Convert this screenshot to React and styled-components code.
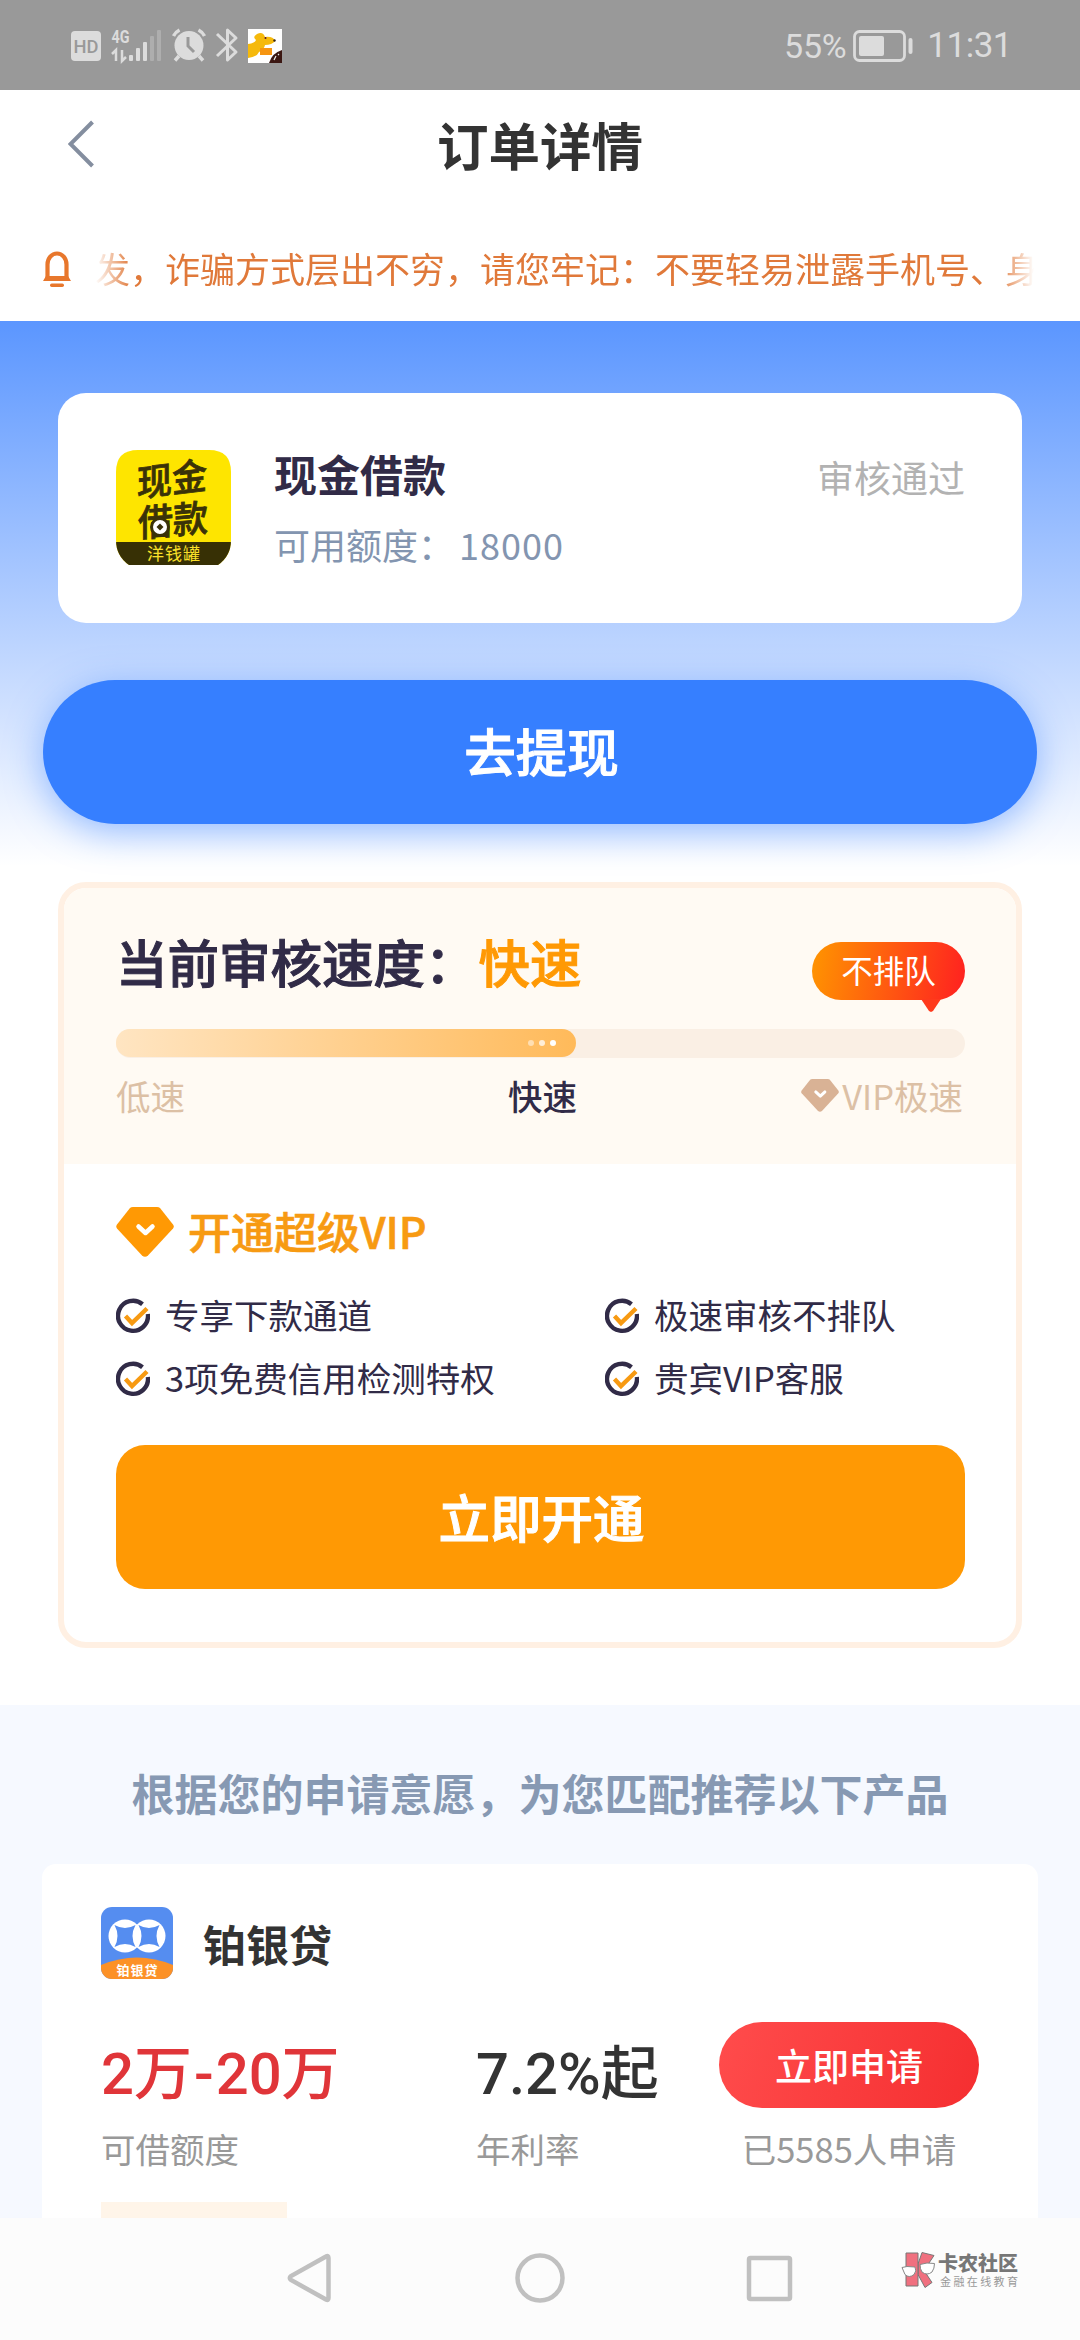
import React from 'react';
import styled, { createGlobalStyle } from 'styled-components';

const App = () => (
  <>
    <GlobalStyle />
    <Page>
      <StatusBar />
      <Header>
        <BackIcon viewBox="0 0 26 48">
          <path d="M24.500 2 2.500 24l22 22" fill="none" stroke="#848e9f" strokeWidth="4" />
        </BackIcon>
        <PageTitle>订单详情</PageTitle>
      </Header>
      <Notice>
        <BellIcon />
        <NoticeText>发，诈骗方式层出不穷，请您牢记：不要轻易泄露手机号、身</NoticeText>
      </Notice>
      <Hero>
        <LoanCard>
          <CashLogo />
          <LoanInfo>
            <LoanName>现金借款</LoanName>
            <LoanLimit>可用额度：<Amount>18000</Amount></LoanLimit>
          </LoanInfo>
          <LoanStatus>审核通过</LoanStatus>
        </LoanCard>
        <WithdrawButton>去提现</WithdrawButton>
      </Hero>
      <VipCard>
        <SpeedPanel>
          <SpeedHead>
            <SpeedTitle>当前审核速度：<Highlight>快速</Highlight></SpeedTitle>
            <QueueBadge>不排队</QueueBadge>
          </SpeedHead>
          <Track>
            <Fill>
              <Dot $opacity={0.5} />
              <Dot $opacity={0.75} />
              <Dot $opacity={1} />
            </Fill>
          </Track>
          <SpeedLabels>
            <SpeedLabel>低速</SpeedLabel>
            <SpeedLabel $active>快速</SpeedLabel>
            <SpeedLabel $end>
              <Diamond width={38} height={33} color="#d9b295" />
              VIP极速
            </SpeedLabel>
          </SpeedLabels>
        </SpeedPanel>
        <VipBody>
          <VipHead>
            <Diamond width={58} height={50} color="#ff9904" />
            <VipTitle>开通超级VIP</VipTitle>
          </VipHead>
          <FeatureGrid>
            {features.map((text) => (
              <Feature key={text}>
                <CheckIcon />
                <FeatureText>{text}</FeatureText>
              </Feature>
            ))}
          </FeatureGrid>
          <OpenButton>立即开通</OpenButton>
        </VipBody>
      </VipCard>
      <Recommend>
        <RecommendTitle>根据您的申请意愿，为您匹配推荐以下产品</RecommendTitle>
        <ProductCard>
          <ProductHead>
            <SilverLogo />
            <ProductName>铂银贷</ProductName>
          </ProductHead>
          <ProductBody>
            <Stat>
              <StatValue $color="#e03539">2万<Dash>-</Dash>20万</StatValue>
              <StatLabel>可借额度</StatLabel>
            </Stat>
            <Stat>
              <StatValue $color="#333">7.2%起</StatValue>
              <StatLabel>年利率</StatLabel>
            </Stat>
            <Apply>
              <ApplyButton>立即申请</ApplyButton>
              <StatLabel>已5585人申请</StatLabel>
            </Apply>
          </ProductBody>
          <ProductTag />
        </ProductCard>
      </Recommend>
      <NavBar>
        <NavIcon viewBox="0 0 52 52">
          <path d="M45.500 6V46Q45.500 49 43 47.500L8 28Q5.500 26 8 24L43 4.500Q45.500 3 45.500 6Z" />
        </NavIcon>
        <NavIcon viewBox="0 0 52 52">
          <circle cx="26" cy="26" r="22.500" />
        </NavIcon>
        <NavIcon viewBox="0 0 52 52">
          <rect x="4" y="6" width="41" height="41" rx="1.500" />
        </NavIcon>
        <Watermark>
          <KLogo />
          <div>
            <WatermarkName>卡农社区</WatermarkName>
            <WatermarkSlogan>金融在线教育</WatermarkSlogan>
          </div>
        </Watermark>
      </NavBar>
    </Page>
  </>
);

export default App;

const features = ['专享下款通道', '极速审核不排队', '3项免费信用检测特权', '贵宾VIP客服'];

const StatusBar = () => (
  <StatusRow>
    <svg width="214" height="40" viewBox="0 0 214 40">
      <rect x="1" y="6" width="30" height="30" rx="4" fill="#dcdcdc" />
      <text x="16" y="28" textAnchor="middle" fontFamily="Roboto, sans-serif" fontWeight="500" fontSize="19" textLength="25" lengthAdjust="spacingAndGlyphs" fill="#999">HD</text>
      <text x="41.500" y="18" fontFamily="Roboto, sans-serif" fontWeight="700" fontSize="18.500" textLength="18" lengthAdjust="spacingAndGlyphs" fill="#dcdcdc">4G</text>
      <path d="M42 29l4-4v11M52 25v11l4-4" fill="none" stroke="#dcdcdc" strokeWidth="2.500" />
      <g fill="#dcdcdc">
        <rect x="59" y="30" width="4" height="6" rx="1" />
        <rect x="66" y="23" width="4" height="13" rx="1" />
        <rect x="73" y="17" width="4" height="19" rx="1" />
      </g>
      <g fill="#aeaeae">
        <rect x="80" y="11" width="4" height="25" rx="1" />
        <rect x="87" y="5" width="4" height="31" rx="1" />
      </g>
      <circle cx="119" cy="20.500" r="14.500" fill="#dcdcdc" />
      <path d="M103.500 11q2-4 6-6M134.500 11q-2-4-6-6M109 31l-4 4.500M129 31l4 4.500" stroke="#dcdcdc" strokeWidth="3.500" fill="none" />
      <path d="M118 12v9l6 6" stroke="#999" strokeWidth="3" fill="none" />
      <path d="M147 9l19 18-8.500 8V5l8.500 8-19 18" fill="none" stroke="#dcdcdc" strokeWidth="3" strokeLinejoin="round" />
      <rect x="178" y="4" width="34" height="34" fill="#fff" />
      <path d="M178 19q7-1 8-4-4-3 1-6 6-3 8 3 8-1 10 4-3 4-10 4-1 5-6 7-2 5-11 6z" fill="#f5b90c" />
      <rect x="190" y="23" width="12" height="7" fill="#f69511" />
      <path d="M199 38q3-10 13-13v13z" fill="#3b1712" />
      <circle cx="195.500" cy="13" r="1" fill="#513" />
      <circle cx="204.500" cy="15.500" r="1.200" fill="#321" />
      <path d="M204 35l2-4M208 30l1-1" stroke="#eee" strokeWidth="1.200" />
    </svg>
    <StatusRight>
      <Percent>55%</Percent>
      <svg width="60" height="34" viewBox="0 0 60 34">
        <rect x="1.500" y="2.500" width="50" height="29" rx="5" fill="none" stroke="#dcdcdc" strokeWidth="2.800" />
        <rect x="6" y="7" width="25" height="20" rx="2" fill="#dcdcdc" />
        <rect x="55.500" y="9" width="4" height="16" rx="2" fill="#dcdcdc" />
      </svg>
      <Clock>11:31</Clock>
    </StatusRight>
  </StatusRow>
);

const BellIcon = () => (
  <svg width="28" height="36" viewBox="0 0 28 36">
    <path d="M4.500 27V13.500a9.500 11 0 0 1 19 0V27" fill="none" stroke="#e8772c" strokeWidth="4.200" />
    <path d="M3 25h22l3 5H0z" fill="#e8772c" />
    <rect x="7" y="32.500" width="14" height="3.500" rx="1.700" fill="#e8772c" />
  </svg>
);

const CashLogo = () => (
  <LogoSvg width="115" height="115" viewBox="0 0 115 115">
    <defs>
      <clipPath id="cash">
        <path d="M22 0H93Q115 0 115 22V90Q115 106 102 115H13Q0 106 0 90V22Q0 0 22 0Z" />
      </clipPath>
    </defs>
    <g clipPath="url(#cash)">
      <rect width="115" height="115" fill="#fee500" />
      <rect y="92" width="115" height="23" fill="#373005" />
    </g>
    <g fill="#3a3208" stroke="#3a3208" strokeWidth="0.800" fontFamily="'Noto Sans CJK SC', sans-serif" fontWeight="500" fontSize="37">
      <text transform="translate(21 47) skewY(-7)" textLength="70" lengthAdjust="spacingAndGlyphs">现金</text>
      <text transform="translate(22 87) skewY(-5)" textLength="70" lengthAdjust="spacingAndGlyphs">借款</text>
    </g>
    <circle cx="44" cy="77" r="8.500" fill="#fff" stroke="#3a3208" strokeWidth="3" />
    <path d="M44 73.500l3.500 3.500-3.500 3.500-3.500-3.500z" fill="#3a3208" />
    <text x="57.500" y="110" textAnchor="middle" fontFamily="'Noto Sans CJK SC', sans-serif" fontSize="17" textLength="53" fill="#fbe02a">洋钱罐</text>
  </LogoSvg>
);

const SilverLogo = () => (
  <svg width="72" height="72" viewBox="0 0 72 72">
    <defs>
      <clipPath id="silver">
        <rect width="72" height="72" rx="11" />
      </clipPath>
    </defs>
    <g clipPath="url(#silver)">
      <rect width="72" height="72" fill="#558df0" />
      <path d="M0 58Q36 43 72 58V72H0Z" fill="#fc9127" />
    </g>
    <circle cx="24" cy="29" r="16.500" fill="#fff" />
    <circle cx="48" cy="29" r="16.500" fill="#fff" />
    <path d="M13.500 18q10.500 6 21 0-6 11 0 22-10.500-6-21 0 6-11 0-22zM37.500 18q10.500 6 21 0-6 11 0 22-10.500-6-21 0 6-11 0-22z" fill="#558df0" />
    <text x="36" y="68" textAnchor="middle" fontFamily="'Noto Sans CJK SC', sans-serif" fontWeight="700" fontSize="13" textLength="41" fill="#fff">铂银贷</text>
  </svg>
);

const Diamond = ({ width, height, color }) => (
  <svg width={width} height={height} viewBox="0 0 58 50">
    <path d="M17 0H41Q43 0 44 1L57 17.500Q58.500 19.500 57 21.500L32 48.500Q29 51 26 48.500L1 21.500Q-.500 19.500 1 17.500L14 1Q15 0 17 0Z" fill={color} />
    <path d="M22.500 19.500l7 6.500 7-6.500" fill="none" stroke="#fff" strokeWidth="4.500" strokeLinecap="round" strokeLinejoin="round" />
  </svg>
);

const CheckIcon = () => (
  <svg width="34" height="36" viewBox="0 0 34 36">
    <path d="M26.500 6.200A15 15 0 1 0 31.900 16" fill="none" stroke="#312b47" strokeWidth="4.400" />
    <path d="M9.500 18l6.500 7L31 10.500" fill="none" stroke="#f79a12" strokeWidth="4.400" />
  </svg>
);

const KLogo = () => (
  <svg width="35" height="36" viewBox="0 0 35 36">
    <g fill="#f0707f" stroke="#777" strokeWidth="1">
      <path d="M21 .500l12 3-10 15 8 12-7 5-7-13V12z" />
      <path d="M5 1h12v33H5z" />
    </g>
    <g fill="#fff" stroke="#888" strokeWidth="1">
      <path d="M1 15.500l5-1 8 .500q2 4-1 7.500-5 4-9 0z" />
      <path d="M19 12.500l7-1.500 7.500.500q0 5-2.500 8.500-5 4-10 0-2-3-2-7.500z" />
    </g>
  </svg>
);

const GlobalStyle = createGlobalStyle`
  body {
    margin: 0;
    background: #fff;
    font-family: 'Noto Sans CJK SC', sans-serif;
  }
  * {
    box-sizing: border-box;
  }
  svg {
    display: block;
    flex-shrink: 0;
  }
`;

const LogoSvg = styled.svg`
  overflow: visible;
`;

const Page = styled.div`
  display: flex;
  flex-direction: column;
  width: 1080px;
  height: 2340px;
  overflow: hidden;
  background: #fff;
`;

const StatusRow = styled.div`
  display: flex;
  justify-content: space-between;
  flex-shrink: 0;
  height: 90px;
  padding: 25px 68px 0 70px;
  background: #999;
`;

const StatusRight = styled.div`
  display: flex;
  height: 42px;
  align-items: center;
  font-family: Roboto, sans-serif;
  font-size: 35px;
  line-height: 42px;
  color: #dcdcdc;
`;

const Percent = styled.span`
  font-size: 34px;
  letter-spacing: -0.3px;
  margin-right: 7px;
`;

const Clock = styled.span`
  margin-left: 14px;
  letter-spacing: -0.5px;
`;

const Header = styled.header`
  display: flex;
  align-items: center;
  flex-shrink: 0;
  height: 108px;
  padding: 0 68px;
`;

const BackIcon = styled.svg`
  width: 26px;
  height: 48px;
`;

const PageTitle = styled.h1`
  flex: 1;
  margin: 0 26px 0 0;
  text-align: center;
  font-size: 51.5px;
  font-weight: 700;
  line-height: 76px;
  color: #333;
`;

const Notice = styled.div`
  display: flex;
  align-items: center;
  flex-shrink: 0;
  height: 123px;
  padding: 18px 46px 0 43px;
  gap: 24px;
`;

const NoticeText = styled.div`
  flex: 1;
  overflow: hidden;
  white-space: nowrap;
  font-size: 35px;
  line-height: 52px;
  color: #e0793a;
  margin: -2px 0 0 0;
  mask-image: linear-gradient(90deg, transparent, #000 36px, #000 calc(100% - 36px), transparent);
`;

const Hero = styled.section`
  flex-shrink: 0;
  height: 561px;
  padding: 72px 43px 0;
  background: linear-gradient(#5b96ff, #fff 545px);
`;

const LoanCard = styled.div`
  display: flex;
  align-items: flex-start;
  height: 230px;
  margin: 0 15px 57px;
  padding: 57px 57px 0 58px;
  border-radius: 28px;
  background: #fff;
`;

const LoanInfo = styled.div`
  flex: 1;
  margin: -7px 0 0 43px;
`;

const LoanName = styled.div`
  font-size: 43px;
  font-weight: 700;
  line-height: 60px;
  color: #312b47;
`;

const LoanLimit = styled.div`
  margin-top: 14px;
  font-size: 36px;
  line-height: 54px;
  color: #8395b0;
`;

const Amount = styled.span`
  margin-left: 5px;
  letter-spacing: 1px;
`;

const LoanStatus = styled.div`
  font-size: 37px;
  line-height: 54px;
  color: #b2b2b2;
`;

const WithdrawButton = styled.button`
  display: block;
  width: 100%;
  height: 144px;
  padding: 0 0 5px 3px;
  border: 0;
  border-radius: 72px;
  background: #367fff;
  box-shadow: 0 8px 36px rgba(54, 127, 255, 0.5);
  font-family: inherit;
  font-size: 51.5px;
  font-weight: 500;
  -webkit-text-stroke: 1px currentColor;
  color: #fff;
`;

const VipCard = styled.section`
  flex-shrink: 0;
  height: 766px;
  margin: 0 58px 57px;
  border: 6px solid #fff0e3;
  border-radius: 28px;
  overflow: hidden;
`;

const SpeedPanel = styled.div`
  height: 276px;
  padding: 38px 51px 0 52px;
  background: #fffaf3;
`;

const SpeedHead = styled.div`
  display: flex;
  justify-content: space-between;
  align-items: flex-start;
  height: 103px;
`;

const SpeedTitle = styled.div`
  font-size: 51.5px;
  font-weight: 500;
  -webkit-text-stroke: 1px currentColor;
  line-height: 70px;
  color: #312b47;
`;

const Highlight = styled.span`
  margin-left: 2px;
  color: #ff9904;
`;

const QueueBadge = styled.div`
  position: relative;
  width: 153px;
  height: 58px;
  margin-top: 16px;
  border-radius: 29px;
  background: linear-gradient(100deg, #ff9500, #ff2020);
  text-align: center;
  font-size: 31.5px;
  line-height: 55px;
  color: #fff;

  &::after {
    content: '';
    position: absolute;
    top: 57px;
    right: 24px;
    width: 20px;
    height: 13px;
    background: #ff3a1c;
    clip-path: polygon(0 0, 100% 0, 60% 92%, 50% 100%, 40% 92%);
  }
`;

const Track = styled.div`
  height: 29px;
  border-radius: 15px;
  background: #faefe4;
`;

const Fill = styled.div`
  display: flex;
  align-items: center;
  justify-content: flex-end;
  gap: 5px;
  width: 460px;
  height: 28px;
  padding-right: 20px;
  border-radius: 15px;
  background: linear-gradient(90deg, #ffe5c2, #ffba5a);
`;

const Dot = styled.i`
  width: 6px;
  height: 6px;
  border-radius: 50%;
  background: #fff;
  opacity: ${({ $opacity }) => $opacity};
`;

const SpeedLabels = styled.div`
  display: grid;
  grid-template-columns: 392px 1fr auto;
  margin-top: 12px;
`;

const SpeedLabel = styled.div`
  display: flex;
  align-items: center;
  gap: 3px;
  font-size: 34.5px;
  line-height: 50px;
  margin-right: ${({ $end }) => ($end ? '2px' : 0)};
  font-weight: ${({ $active }) => ($active ? 500 : 400)};
  color: ${({ $active }) => ($active ? '#312b47' : '#dcc0a5')};
`;

const VipBody = styled.div`
  padding: 38px 51px 0 52px;
`;

const VipHead = styled.div`
  display: flex;
  align-items: center;
  gap: 14px;
  height: 60px;
`;

const VipTitle = styled.div`
  margin-top: -5px;
  font-size: 43px;
  font-weight: 500;
  -webkit-text-stroke: 0.6px currentColor;
  line-height: 60px;
  color: #f79a12;
`;

const FeatureGrid = styled.div`
  display: grid;
  grid-template-columns: 489px 1fr;
  grid-auto-rows: 63px;
  margin-top: 22px;
`;

const Feature = styled.div`
  display: flex;
  align-items: center;
  gap: 15px;
`;

const FeatureText = styled.span`
  margin-top: -3px;
  white-space: nowrap;
  font-size: 34.5px;
  line-height: 50px;
  color: #312b47;
`;

const OpenButton = styled.button`
  display: block;
  width: 100%;
  height: 144px;
  margin-top: 35px;
  padding: 0 0 3px 2px;
  border: 0;
  border-radius: 29px;
  background: #ff9904;
  font-family: inherit;
  font-size: 51.5px;
  font-weight: 500;
  -webkit-text-stroke: 1px currentColor;
  color: #fff;
`;

const Recommend = styled.section`
  flex: 1;
  overflow: hidden;
  padding: 0 42px;
  background: #f6f9ff;
`;

const RecommendTitle = styled.h2`
  height: 159px;
  margin: 0;
  padding-top: 55px;
  text-align: center;
  font-size: 43px;
  font-weight: 700;
  line-height: 64px;
  color: #8799b3;
`;

const ProductCard = styled.div`
  height: 400px;
  padding: 43px 59px 0;
  border-radius: 14px;
  background: #fff;
`;

const ProductHead = styled.div`
  display: flex;
  align-items: center;
  height: 72px;
  gap: 30px;
`;

const ProductName = styled.div`
  font-size: 43px;
  font-weight: 700;
  line-height: 60px;
  color: #333;
`;

const ProductBody = styled.div`
  display: grid;
  grid-template-columns: 375px 1fr 260px;
  height: 223px;
  padding-top: 43px;
`;

const Stat = styled.div`
  padding-top: 17px;
`;

const StatValue = styled.div`
  height: 84px;
  font-family: Roboto, 'Noto Sans CJK SC', sans-serif;
  font-size: 58px;
  font-weight: 500;
  line-height: 70px;
  white-space: nowrap;
  color: ${({ $color }) => $color};
`;

const Dash = styled.span`
  margin: 0 2px;
`;

const StatLabel = styled.div`
  font-size: 34.5px;
  line-height: 50px;
  color: #999;
`;

const Apply = styled.div`
  display: flex;
  flex-direction: column;
  align-items: center;
`;

const ApplyButton = styled.button`
  width: 260px;
  height: 86px;
  margin-bottom: 15px;
  padding: 0;
  border: 0;
  border-radius: 43px;
  background: linear-gradient(110deg, #ff4c4c, #f52e30);
  font-family: inherit;
  font-size: 37px;
  font-weight: 500;
  color: #fff;
`;

const ProductTag = styled.div`
  width: 186px;
  height: 50px;
  background: #fff5e9;
`;

const NavBar = styled.nav`
  display: flex;
  flex-shrink: 0;
  height: 122px;
  padding: 34px 0 0 283px;
  gap: 179px;
  background: #fcfcfc;
`;

const NavIcon = styled.svg`
  width: 52px;
  height: 52px;
  fill: none;
  stroke: #c0c0c0;
  stroke-width: 4.5;
`;

const Watermark = styled.div`
  display: flex;
  gap: 2px;
  margin-left: -75px;
`;

const WatermarkName = styled.div`
  white-space: nowrap;
  font-size: 20px;
  font-weight: 900;
  line-height: 22px;
  color: #777;
`;

const WatermarkSlogan = styled.div`
  margin-left: 2px;
  white-space: nowrap;
  font-size: 11px;
  letter-spacing: 2.4px;
  line-height: 14px;
  color: #999;
`;
